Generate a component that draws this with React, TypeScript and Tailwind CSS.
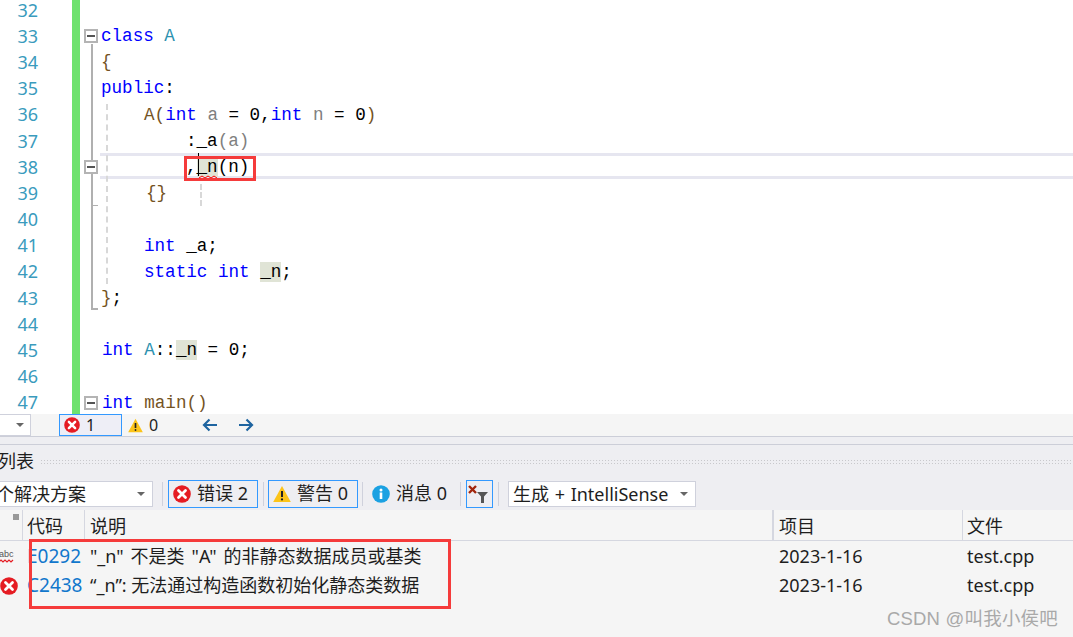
const ui = 'font-["Noto_Sans","Noto_Sans_CJK_SC",sans-serif]'

function ErrorIcon({ size = 18 }: { size?: number }) {
  return (
    <svg width={size} height={size} viewBox="0 0 18 18" className="shrink-0">
      <circle cx="9" cy="9" r="8.8" fill="#e51c23" />
      <path d="M5.5 5.5l7 7M12.5 5.5l-7 7" stroke="#fff" strokeWidth="2.8" strokeLinecap="round" />
    </svg>
  )
}

function WarnIcon({ size = 18 }: { size?: number }) {
  return (
    <svg width={size} height={size} viewBox="0 0 18 18" className="shrink-0">
      <path d="M9 1L17.8 17H.2z" fill="#fcc419" />
      <path d="M9 6v6" stroke="#222" strokeWidth="2" />
      <circle cx="9" cy="14.4" r="1.1" fill="#222" />
    </svg>
  )
}

function InfoIcon() {
  return (
    <svg width="18" height="18" viewBox="0 0 18 18" className="shrink-0">
      <circle cx="9" cy="9" r="8.8" fill="#1ba1e2" />
      <rect x="7.7" y="7.5" width="2.6" height="6.5" fill="#fff" />
      <circle cx="9" cy="5" r="1.5" fill="#fff" />
    </svg>
  )
}

function Caret() {
  return <div className="w-0 h-0 border-x-[4px] border-x-transparent border-t-[4px] border-t-[#666]" />
}

function Fold() {
  return (
    <div className="relative z-10 w-[14px] h-[14px] border-2 border-[#b4b4b4] bg-white flex items-center justify-center">
      <div className="w-[8px] h-[2px] bg-[#555]" />
    </div>
  )
}

const K = ({ c }: { c: string }) => <span className="text-[#0000ff]">{c}</span>
const T = ({ c }: { c: string }) => <span className="text-[#2b91af]">{c}</span>
const P = ({ c }: { c: string }) => <span className="text-[#808080]">{c}</span>
const F = ({ c }: { c: string }) => <span className="text-[#74531f]">{c}</span>
const Hl = ({ c }: { c: string }) => <span className="bg-[#e0e4d6]">{c}</span>

const lines: { n: number; pad: number; fold?: boolean; code?: React.ReactNode }[] = [
  { n: 32, pad: 0 },
  { n: 33, pad: 0, fold: true, code: <><K c="class" /> <T c="A" /></> },
  { n: 34, pad: 0, code: <F c="{" /> },
  { n: 35, pad: 0, code: <><K c="public" />:</> },
  { n: 36, pad: 43, code: <><F c="A(" /><K c="int" /> <P c="a" /> = 0,<K c="int" /> <P c="n" /> = 0<F c=")" /></> },
  { n: 37, pad: 85, code: <>:_a<P c="(a)" /></> },
  { n: 38, pad: 85, fold: true, code: <>,<Hl c="_n" />(n)</> },
  { n: 39, pad: 45, code: <F c="{}" /> },
  { n: 40, pad: 0 },
  { n: 41, pad: 43, code: <><K c="int" /> _a;</> },
  { n: 42, pad: 43, code: <><K c="static" /> <K c="int" /> <Hl c="_n" />;</> },
  { n: 43, pad: 0, code: <><F c="}" />;</> },
  { n: 44, pad: 0 },
  { n: 45, pad: 1, code: <><K c="int" /> <T c="A" />::<Hl c="_n" /> = 0;</> },
  { n: 46, pad: 0 },
  { n: 47, pad: 1, fold: true, code: <><K c="int" /> <F c="main()" /></> },
]

function Editor() {
  return (
    <div className="relative h-[414px] overflow-hidden bg-white">
      {/* current line frame */}
      <div className="absolute left-[100px] right-0 top-[153px] h-[26px] border-y-[3px] border-[#e6e6f0]" />
      <div className="relative -mt-[3px]">
        {lines.map(l => (
          <div key={l.n} className="flex h-[26.2px] items-center">
            <div className={`w-[38px] shrink-0 text-right text-[18px] text-[#3a9bbd] ${ui}`}>{l.n}</div>
            <div className="w-[34px] shrink-0" />
            <div className="w-[8px] shrink-0 self-stretch bg-[#6ee26e]" />
            <div className="w-[21px] shrink-0 flex justify-center pl-[1px]">{l.fold && <Fold />}</div>
            <div
              className='whitespace-pre text-[17.6px] text-black font-["Liberation_Mono",monospace]'
              style={{ paddingLeft: l.pad }}
            >
              {l.code}
            </div>
          </div>
        ))}
      </div>
      {/* fold lines */}
      <div className="absolute left-[91px] top-[44px] h-[265px] w-[2px] bg-[#b0b0b0]" />
      <div className="absolute left-[91px] top-[308px] h-[2px] w-[7px] bg-[#b0b0b0]" />
      <div className="absolute left-[91px] top-[205px] h-px w-[7px] bg-[#b0b0b0]" />
      {/* indent guides */}
      <div className="absolute left-[106px] top-[104px] h-[180px] border-l-2 border-dashed border-[#d8d8d8]" />
      <div className="absolute left-[200px] top-[184px] h-[22px] border-l-2 border-dashed border-[#d8d8d8]" />
      {/* caret */}
      <div className="absolute left-[198px] top-[153px] h-[23px] w-px bg-black" />
      {/* squiggle */}
      <svg width="20" height="4" viewBox="0 0 20 4" className="absolute left-[199px] top-[175px]">
        <path d="M0 3l3-2 3 2 3-2 3 2 3-2 3 2" fill="none" stroke="#f00" strokeWidth="1" />
      </svg>
      {/* red annotation */}
      <div className="absolute left-[184px] top-[156px] h-[25px] w-[72px] border-[3px] border-[#f53b3b]" />
    </div>
  )
}

function StatusBar() {
  return (
    <div className={`flex h-[22px] items-center bg-[#f5f5f5] text-[16px] text-[#222] ${ui}`}>
      <div className="flex h-[22px] w-[31px] items-center justify-end border border-l-0 border-[#cfd1dc] bg-white pr-[6px]">
        <Caret />
      </div>
      <div className="ml-[28px] flex h-[22px] w-[63px] items-center gap-[6px] border border-[#3399ff] bg-[#eeeef6] pl-[4px]">
        <ErrorIcon size={16} />
        <span>1</span>
      </div>
      <div className="ml-[6px] flex items-center gap-[6px]">
        <WarnIcon size={15} />
        <span>0</span>
      </div>
      <svg width="16" height="14" viewBox="0 0 16 14" className="ml-[44px]">
        <path d="M15 7H2M7.5 1.5L2 7l5.5 5.5" fill="none" stroke="#1e64a0" strokeWidth="2.2" />
      </svg>
      <svg width="16" height="14" viewBox="0 0 16 14" className="ml-[20px]">
        <path d="M1 7h13M8.5 1.5L14 7l-5.5 5.5" fill="none" stroke="#1e64a0" strokeWidth="2.2" />
      </svg>
    </div>
  )
}

function Sep() {
  return <div className="h-[24px] w-px bg-[#cfd1dc]" />
}

function ErrorList() {
  return (
    <div className={`bg-[#eeeef2] text-[#1e1e1e] ${ui}`}>
      <div className="h-[9px] border-y border-[#ccced8]" />
      <div className="flex h-[32px] items-center overflow-hidden">
        <span className="-ml-[2px] text-[18px] leading-none">列表</span>
        <div className="ml-[6px] h-[5px] flex-1 bg-[radial-gradient(#c8c8cc_1px,transparent_1px)] bg-[length:3px_3px]" />
      </div>
      <div className="flex h-[33px] items-center text-[18px]">
        <div className="flex h-[26px] w-[153px] items-center justify-between border border-l-0 border-[#cfd1dc] bg-white pr-[7px] overflow-hidden">
          <span className="-ml-[4px] leading-none">个解决方案</span>
          <Caret />
        </div>
        <div className="ml-[9px]"><Sep /></div>
        <div className="ml-[5px] flex h-[28px] w-[90px] items-center gap-[6px] border border-[#3399ff] pl-[4px]">
          <ErrorIcon />
          <span>错误 2</span>
        </div>
        <div className="ml-[5px]"><Sep /></div>
        <div className="ml-[4px] flex h-[28px] w-[90px] items-center gap-[6px] border border-[#3399ff] pl-[4px]">
          <WarnIcon />
          <span>警告 0</span>
        </div>
        <div className="ml-[4px]"><Sep /></div>
        <div className="ml-[9px] flex items-center gap-[6px]">
          <InfoIcon />
          <span>消息 0</span>
        </div>
        <div className="ml-[13px]"><Sep /></div>
        <div className="ml-[5px] flex h-[28px] w-[27px] items-center justify-center border border-[#3399ff]">
          <svg width="22" height="20" viewBox="0 0 22 20">
            <path d="M1 2l7 7M8 2L1 9" stroke="#a1260d" strokeWidth="2.4" />
            <path d="M9 8h11l-4 4.5V19h-3v-6.5z" fill="#555" />
          </svg>
        </div>
        <div className="ml-[5px]"><Sep /></div>
        <div className="ml-[9px] flex h-[26px] w-[188px] items-center justify-between border border-[#cfd1dc] bg-white pl-[4px] pr-[7px]">
          <span className="whitespace-nowrap leading-none [word-spacing:1px]">生成 + IntelliSense</span>
          <Caret />
        </div>
      </div>
      <div className="bg-[#f5f5f5]">
        <div className="flex h-[31px] items-center border-b border-[#d5d7e0] text-[18px]">
          <div className="relative h-full w-[23px] border-r border-[#d5d7e0]">
            <div className="absolute right-[3px] top-[4px] h-[6px] w-[6px] bg-[radial-gradient(#999_0.8px,transparent_0.8px)] bg-[length:2px_2px]" />
          </div>
          <div className="flex h-full w-[62px] items-center border-r border-[#d5d7e0] pl-[4px] pt-[2px]">代码</div>
          <div className="flex h-full w-[689px] items-center border-r-2 border-[#d5d7e0] pl-[5px] pt-[2px]">说明</div>
          <div className="flex h-full w-[189px] items-center border-r border-[#d5d7e0] pl-[5px] pt-[2px]">项目</div>
          <div className="pl-[4px] pt-[2px]">文件</div>
        </div>
        <div className="relative h-[95px] pt-[1px] text-[18px] whitespace-nowrap">
          <Row
            icon={
              <svg width="16" height="18" viewBox="0 0 16 18" className="-ml-[1px]">
                <text x="0" y="9" fontSize="9" fill="#555" fontFamily="Liberation Sans">abc</text>
                <path d="M0 14l2-2 2 2 2-2 2 2 2-2 2 2 2-2" fill="none" stroke="#e51c23" strokeWidth="1.2" />
              </svg>
            }
            code="E0292"
            desc={'"_n" 不是类 "A" 的非静态数据成员或基类'}
            descClass="[word-spacing:2.3px]"
          />
          <Row
            icon={<ErrorIcon />}
            code="C2438"
            desc={'“_n”: 无法通过构造函数初始化静态类数据'}
          />
          <div className="absolute left-[29px] top-[-2px] h-[70px] w-[422px] border-[3px] border-[#f53b3b]" />
          <div className='absolute right-[15px] top-[64px] text-[18.5px] tracking-[0.2px] text-[#a9a9a9] font-["Liberation_Sans","Noto_Sans_CJK_SC",sans-serif]'>
            CSDN @叫我小侯吧
          </div>
        </div>
      </div>
    </div>
  )
}

function Row({ icon, code, desc, descClass }: { icon: React.ReactNode; code: string; desc: string; descClass?: string }) {
  return (
    <div className="flex h-[29px] items-center">
      <div className="w-[24px] shrink-0">{icon}</div>
      <div className="w-[66px] shrink-0 overflow-hidden pl-[3px] text-[19px] text-[#1177cc]">{code}</div>
      <div className={`w-[689px] shrink-0 ${descClass ?? ''}`}>{desc}</div>
      <div className="w-[188px] shrink-0">2023-1-16</div>
      <div>test.cpp</div>
    </div>
  )
}

export default function App() {
  return (
    <div className="h-[637px] w-[1073px] overflow-hidden bg-[#f5f5f5]">
      <Editor />
      <StatusBar />
      <ErrorList />
    </div>
  )
}
